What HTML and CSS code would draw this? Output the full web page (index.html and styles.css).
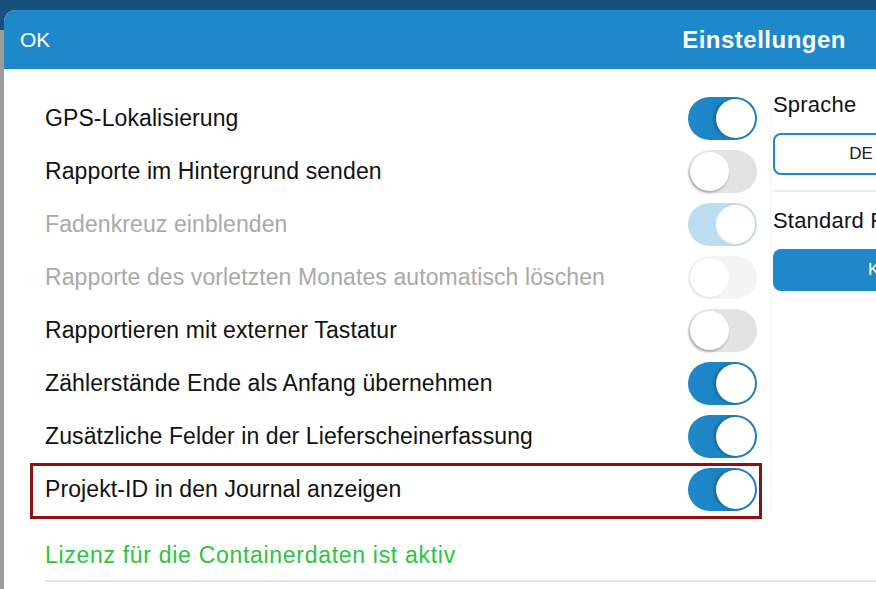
FILE: index.html
```html
<!DOCTYPE html>
<html lang="de">
<head>
  <meta charset="UTF-8" />
  <meta name="viewport" content="width=device-width, initial-scale=1" />
  <title>Einstellungen</title>
  <link rel="stylesheet" href="styles.css">
</head>
<body>
  <div class="modal">
    <div class="modal-header">
      <span class="ok">OK</span>
      <h1>Einstellungen</h1>
    </div>

    <div class="modal-body">
      <div class="settings">
        <div class="row">
          <span>GPS-Lokalisierung</span>
          <span class="switch on"><span class="knob"></span></span>
        </div>
        <div class="row">
          <span>Rapporte im Hintergrund senden</span>
          <span class="switch"><span class="knob"></span></span>
        </div>
        <div class="row disabled">
          <span>Fadenkreuz einblenden</span>
          <span class="switch on"><span class="knob"></span></span>
        </div>
        <div class="row disabled">
          <span>Rapporte des vorletzten Monates automatisch löschen</span>
          <span class="switch"><span class="knob"></span></span>
        </div>
        <div class="row">
          <span>Rapportieren mit externer Tastatur</span>
          <span class="switch"><span class="knob"></span></span>
        </div>
        <div class="row">
          <span>Zählerstände Ende als Anfang übernehmen</span>
          <span class="switch on"><span class="knob"></span></span>
        </div>
        <div class="row">
          <span>Zusätzliche Felder in der Lieferscheinerfassung</span>
          <span class="switch on"><span class="knob"></span></span>
        </div>
        <div class="row highlight">
          <span>Projekt-ID in den Journal anzeigen</span>
          <span class="switch on"><span class="knob"></span></span>
        </div>
      </div>

      <div class="side">
        <div class="side-label">Sprache</div>
        <div class="segments">
          <span class="segment">DE</span>
        </div>
        <div class="side-sep"></div>
        <div class="side-label">Standard Fahrzeug</div>
        <div class="side-btn">Kein Fahrzeug</div>
      </div>
    </div>

    <div class="license">Lizenz für die Containerdaten ist aktiv</div>
    <div class="bottom-sep"></div>
  </div>
</body>
</html>
```

FILE: styles.css
```css
html, body {
  margin: 0;
  height: 100%;
  overflow: hidden;
}

body {
  font-family: "Liberation Sans", Arial, sans-serif;
  background: linear-gradient(#17507a 0, #17507a 30px, #9c9c9c 30px);
  padding: 10px 0 0 4px;
  box-sizing: border-box;
  color: #111;
}

.modal {
  background: #fff;
  height: 100%;
  border-top-left-radius: 12px;
  overflow: hidden;
}

.modal-header {
  height: 59px;
  background: #1e88c9;
  color: #fff;
  display: flex;
  align-items: center;
  justify-content: space-between;
  padding: 0 30px 0 16px;
}

.ok {
  font-size: 21px;
}

h1 {
  margin: 0;
  font-size: 24px;
  font-weight: bold;
  letter-spacing: 0.5px;
}

.modal-body {
  display: flex;
  padding-top: 23px;
}

.settings {
  width: 732px;
  margin-left: 26px;
  flex-shrink: 0;
}

.row {
  position: relative;
  height: 53px;
  display: flex;
  align-items: center;
  justify-content: space-between;
  padding: 0 5px 0 15px;
  font-size: 23px;
  letter-spacing: 0.1px;
}

.row.disabled {
  color: #a9a9a9;
}

.row.highlight::after {
  content: "";
  position: absolute;
  top: 0;
  bottom: -3px;
  left: 0;
  right: 0;
  border: 3px solid #8e1111;
}

.switch {
  width: 69px;
  height: 43px;
  border-radius: 22px;
  background: linear-gradient(90deg, #e8e8e8, #e1e1e1);
  display: flex;
  align-items: center;
  padding: 0 2px;
  box-sizing: border-box;
}

.knob {
  width: 39px;
  height: 39px;
  border-radius: 50%;
  background: #fff;
  box-shadow: -1px 2px 3px rgba(0, 0, 0, 0.28);
}

.switch.on {
  background: linear-gradient(90deg, #1f88c8, #1a80bf);
  justify-content: flex-end;
}

.switch.on .knob {
  box-shadow: -2px 0 3px rgba(0, 0, 0, 0.25);
}

.disabled .switch {
  background: #f4f4f4;
}

.disabled .switch .knob {
  box-shadow: -1px 1px 3px rgba(0, 0, 0, 0.08);
}

.disabled .switch.on {
  background: #bcdcf0;
}

.disabled .switch.on .knob {
  box-shadow: none;
}

.side {
  flex: 1;
  min-width: 0;
  margin-left: 8px;
  padding-left: 2px;
  border-left: 1px solid #f6f6f6;
  overflow: hidden;
}

.side-label {
  font-size: 22px;
  letter-spacing: 0.2px;
  height: 26px;
  line-height: 26px;
  white-space: nowrap;
}

.segments {
  margin-top: 15px;
  width: 320px;
  height: 42px;
  border: 2px solid #1e88c9;
  border-radius: 8px;
  box-sizing: border-box;
  display: flex;
  align-items: center;
}

.segment {
  width: 172px;
  text-align: center;
  font-size: 17px;
  color: #222;
}

.side-sep {
  height: 2px;
  background: #ececec;
  margin: 15px 0 16px;
}

.side-btn {
  margin-top: 15px;
  width: 318px;
  height: 42px;
  line-height: 42px;
  border-radius: 8px;
  background: #1e88c9;
  color: #fff;
  font-size: 17px;
  padding-left: 95px;
  box-sizing: border-box;
  white-space: nowrap;
}

.license {
  margin: 26px 0 0 41px;
  color: #2bc43b;
  font-size: 23px;
  letter-spacing: 0.7px;
}

.bottom-sep {
  height: 2px;
  background: #e4e4e4;
  margin: 11px 0 0 41px;
}
```
